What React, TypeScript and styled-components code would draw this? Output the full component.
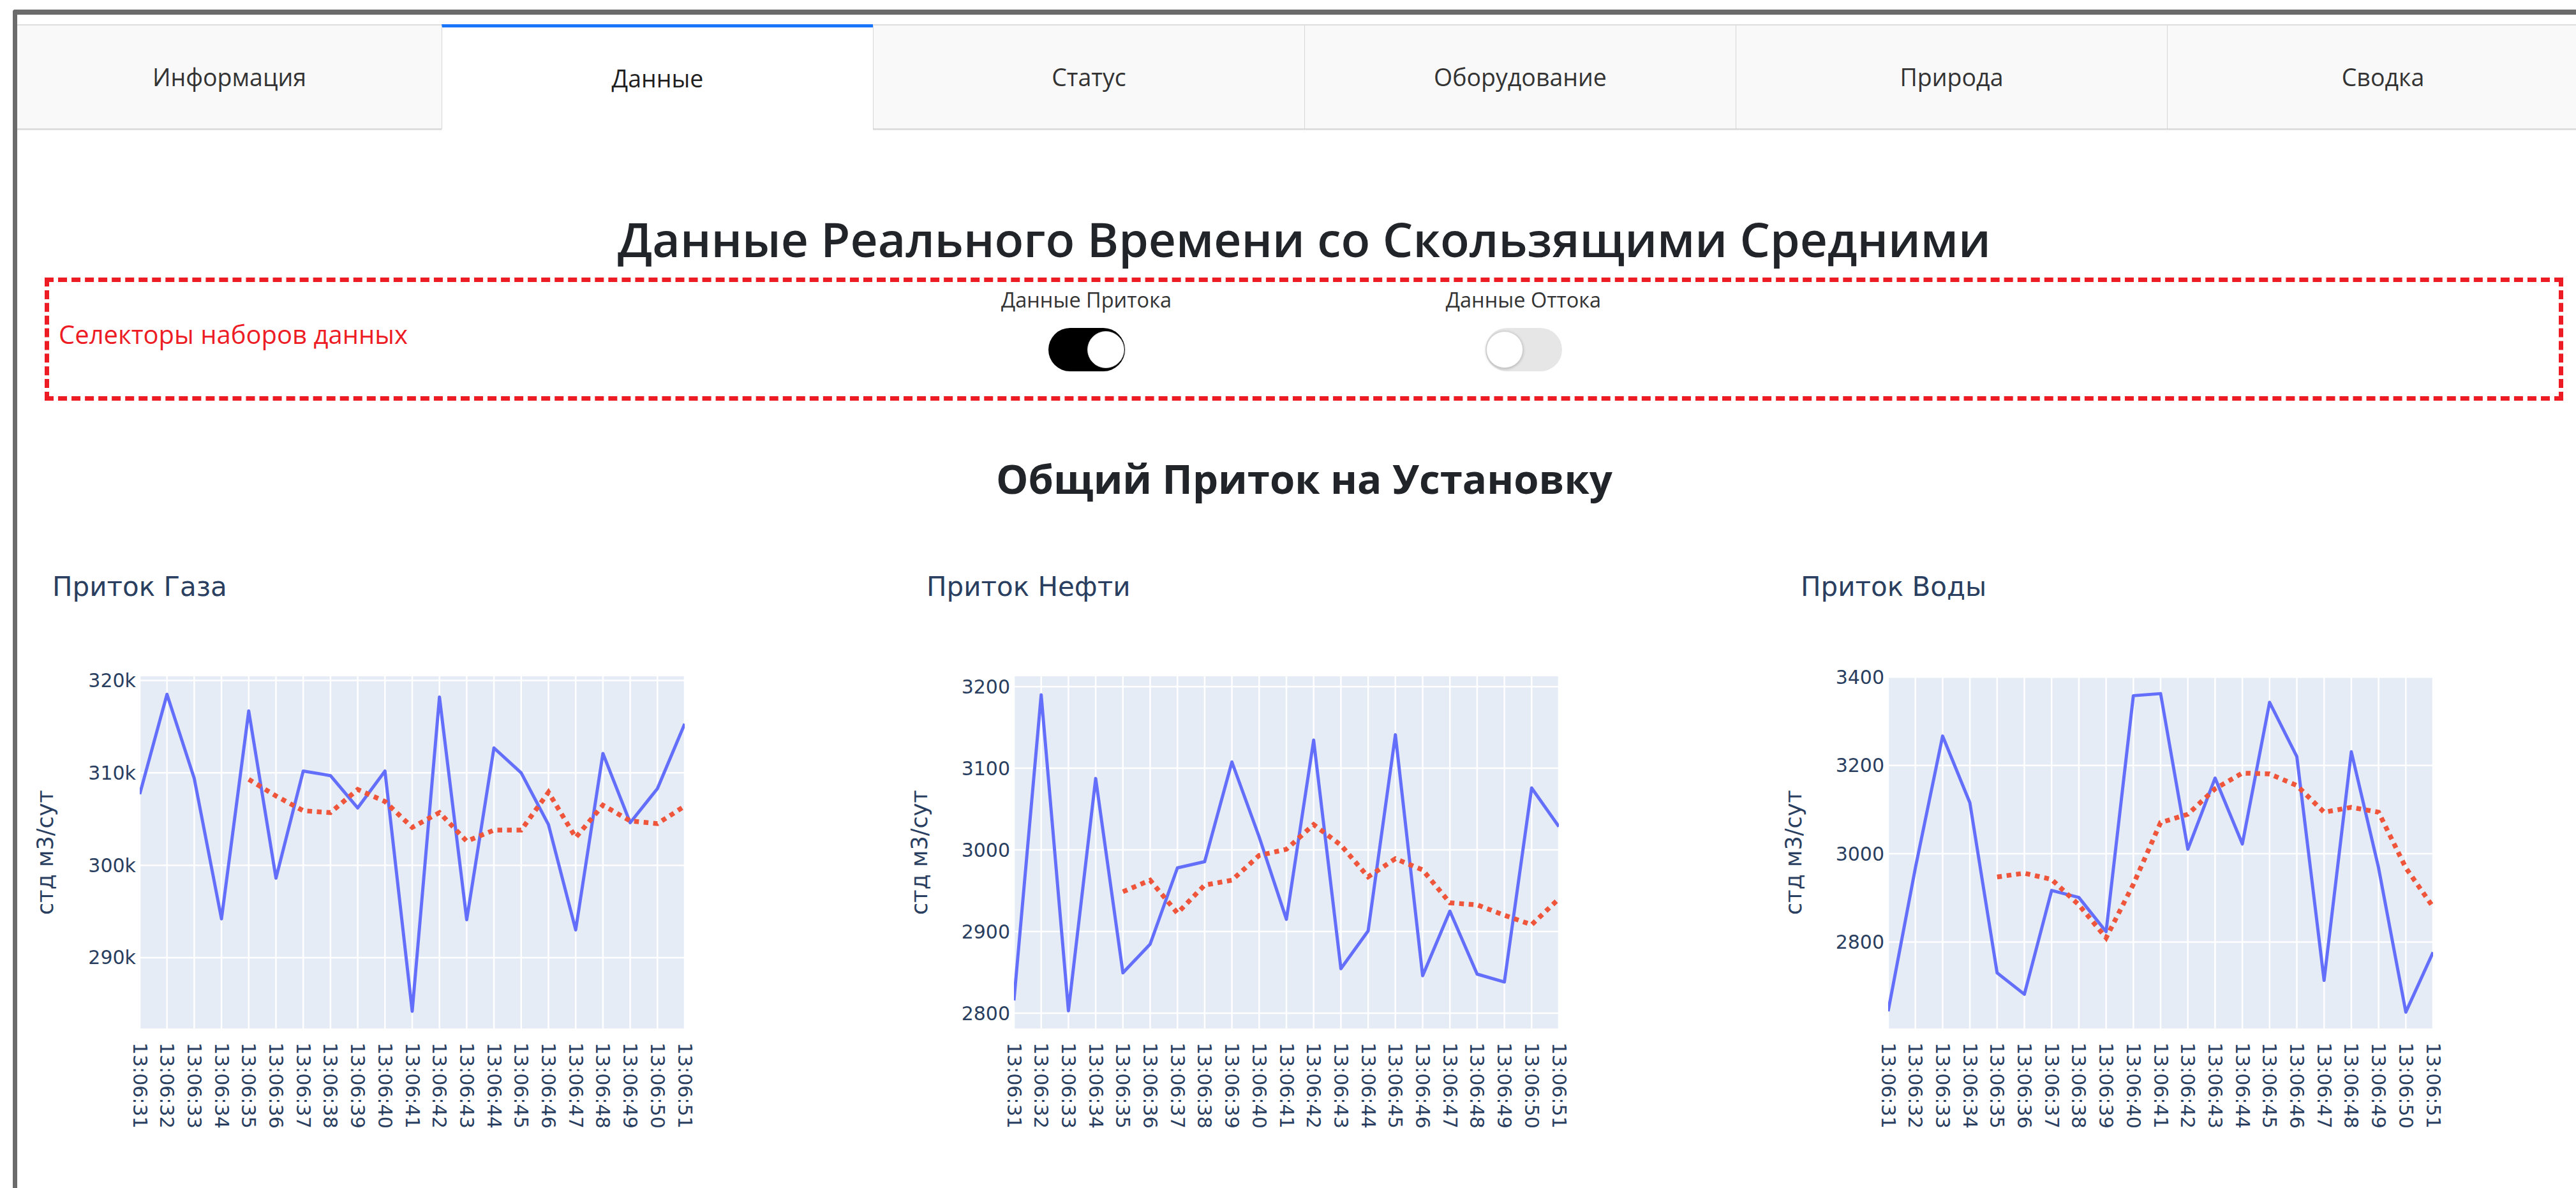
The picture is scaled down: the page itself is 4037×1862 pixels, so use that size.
import React from 'react';
import styled, { createGlobalStyle } from 'styled-components';

const GlobalStyle = createGlobalStyle`
  html, body {
    margin: 0;
    padding: 0;
    background: #ffffff;
  }
  body {
    width: 4037px;
    height: 1862px;
    overflow: hidden;
    font-family: "Open Sans", "Noto Sans", sans-serif;
  }
`;

const Screen = styled.div`
  width: 4037px;
  height: 1862px;
  padding-top: 15px;
  box-sizing: border-box;
  overflow: hidden;
`;

// grey window outline, only top and left are in view
const Frame = styled.div`
  margin-left: 20px;
  height: 100%;
  box-sizing: border-box;
  padding-top: 15px;
  border-top: 8px solid #6b6b6b;
  border-left: 7px solid #6b6b6b;
  border-top-left-radius: 4px;
`;

const Content = styled.div`
  width: 4034px;
`;

const TabStrip = styled.div`
  display: grid;
  grid-template-columns: 665px repeat(5, 676px);
`;

const Tab = styled.div<{ $active?: boolean }>`
  height: 166px;
  box-sizing: border-box;
  display: flex;
  align-items: center;
  justify-content: center;
  font-size: 37.5px;
  color: ${p => (p.$active ? '#1f1f1f' : '#333333')};
  background: ${p => (p.$active ? '#ffffff' : '#f9f9f9')};
  border-top: ${p => (p.$active ? '5px solid #1975fa' : '2px solid #dedede')};
  border-bottom: 3px solid ${p => (p.$active ? '#ffffff' : '#dedede')};
  border-left: 1px solid #d6d6d6;

  &:first-child {
    border-left: none;
  }
`;

const MainTitle = styled.h1`
  margin: 120px 0 0;
  font-size: 75px;
  line-height: 100px;
  font-weight: 600;
  color: #212529;
  text-align: center;
`;

const SelectorBox = styled.div`
  margin: 11px 0 0 43px;
  width: 3947px;
  height: 193px;
  box-sizing: border-box;
  padding: 8px 0 0 15px;
  border: 7px dashed #ed1c24;
  display: grid;
  grid-template-columns: 1268px 685px 685px;
`;

const SelectorNote = styled.div`
  align-self: center;
  margin-bottom: 24px;
  font-size: 40px;
  line-height: 56px;
  color: #ed1c24;
`;

const SwitchItem = styled.div`
  display: flex;
  flex-direction: column;
  align-items: center;
`;

const SwitchLabel = styled.div`
  font-size: 32.5px;
  line-height: 40px;
  color: #333333;
`;

const SwitchTrack = styled.div<{ $on?: boolean }>`
  margin-top: 24px;
  width: 120px;
  height: 68px;
  box-sizing: border-box;
  padding: 0 1px;
  border-radius: 34px;
  background: ${p => (p.$on ? '#000000' : '#e6e6e6')};
  display: flex;
  align-items: center;
  justify-content: ${p => (p.$on ? 'flex-end' : 'flex-start')};
`;

const SwitchKnob = styled.div`
  width: 58px;
  height: 58px;
  box-sizing: border-box;
  border-radius: 50%;
  background: #ffffff;
  border: 1px solid #d4d4d4;
  box-shadow: 0 1px 4px rgba(0, 0, 0, 0.25);
`;

const SectionTitle = styled.h3`
  margin: 82px 0 0;
  font-size: 63.5px;
  line-height: 80px;
  font-weight: 700;
  color: #212529;
  text-align: center;
`;

const ChartRow = styled.div`
  margin: 50px 0 0 -8px;
  display: grid;
  grid-template-columns: repeat(3, 1370px);
`;

const ChartSvg = styled.svg`
  display: block;
  font-family: "DejaVu Sans", Verdana, sans-serif;
`;

interface chartProps {
  title: string,
  min: number,
  max: number,
  ticks: number[],
  format: (v: number) => string,
  raw: number[],
  avg: (number | null)[]
}

// plot geometry inside one chart cell
const W = 1370;
const H = 1022;
const PL = 200;
const PR = 1054;
const PT = 220;
const PB = 772;

const times = Array.from({ length: 21 }, (_, i) => '13:06:' + (31 + i));

const LineChart = (props: chartProps) => {
  const { title, min, max, ticks, format, raw, avg } = props;
  const step = (PR - PL) / (raw.length - 1);
  const x = (i: number) => PL + i * step;
  const y = (v: number) => PT + ((max - v) / (max - min)) * (PB - PT);
  const clipId = 'clip-' + title.replace(/\s/g, '');

  const rawPts = raw.map((v, i) => `${x(i)},${y(v)}`).join(' ');
  const avgPts = avg
    .map((v, i) => (v === null ? null : `${x(i)},${y(v)}`))
    .filter(Boolean)
    .join(' ');

  return (
    <ChartSvg width={W} height={H} viewBox={`0 0 ${W} ${H}`}>
      <defs>
        <clipPath id={clipId}>
          <rect x={PL} y={PT} width={PR - PL} height={PB - PT} />
        </clipPath>
      </defs>

      <text x={63} y={94} fontSize={42} fill="#2a3f5f">{title}</text>

      <rect x={PL} y={PT} width={PR - PL} height={PB - PT} fill="#e5ecf6" />
      {times.map((t, i) => (
        <line key={t} x1={x(i)} x2={x(i)} y1={PT} y2={PB} stroke="#ffffff" strokeWidth={2.5} />
      ))}
      {ticks.map(v => (
        <line key={v} x1={PL} x2={PR} y1={y(v)} y2={y(v)} stroke="#ffffff" strokeWidth={2.5} />
      ))}

      <g clipPath={`url(#${clipId})`}>
        <polyline points={rawPts} fill="none" stroke="#636efa" strokeWidth={5} strokeLinejoin="round" />
        <polyline points={avgPts} fill="none" stroke="#ef553b" strokeWidth={7.5} strokeDasharray="7.5 7.5" />
      </g>

      {ticks.map(v => (
        <text key={v} x={PL - 6} y={y(v)} dy="0.35em" textAnchor="end" fontSize={30} fill="#2a3f5f">
          {format(v)}
        </text>
      ))}

      {times.map((t, i) => (
        <text
          key={t}
          transform={`translate(${x(i)}, ${PB + 22}) rotate(90)`}
          dy="0.35em"
          fontSize={30}
          fill="#2a3f5f"
        >
          {t}
        </text>
      ))}

      <text
        transform={`translate(52, ${(PT + PB) / 2}) rotate(-90)`}
        dy="0.35em"
        textAnchor="middle"
        fontSize={35}
        fill="#2a3f5f"
      >
        стд м3/сут
      </text>
    </ChartSvg>
  );
};

const gas = {
  raw: [307.7, 318.5, 309.4, 294.2, 316.7, 298.6, 310.2, 309.7, 306.2, 310.2, 284.2,
    318.2, 294.1, 312.7, 310.0, 304.4, 293.0, 312.1, 304.6, 308.3, 315.3].map(v => v * 1000),
  avg: [null, null, null, null, 309.3, 307.5, 305.9, 305.7, 308.2, 306.9, 304.1,
    305.7, 302.6, 303.8, 303.8, 307.9, 303.0, 306.5, 304.8, 304.5, 306.4].map(v => (v === null ? null : v * 1000))
};

const oil = {
  raw: [2815.6, 3190, 2803, 3087.5, 2849.4, 2884.7, 2978, 2985.6, 3107.7, 3015.9, 2915,
    3134.4, 2854.5, 2900.9, 3141, 2845.9, 2925, 2847.9, 2838.3, 3075.9, 3028.5],
  avg: [null, null, null, null, 2948.8, 2962.9, 2922.6, 2956.9, 2962.9, 2993.2, 3000.8,
    3031, 3005.8, 2967, 2989.2, 2975.5, 2935.2, 2932.7, 2920, 2908.4, 2940.2]
};

const water = {
  raw: [2643, 2968, 3266.6, 3115.4, 2730, 2681.5, 2916.7, 2900.8, 2823.3, 3358, 3362.7,
    3010, 3171.4, 3022, 3343, 3220, 2713, 3231, 2968, 2641, 2776.7],
  avg: [null, null, null, null, 2947.4, 2955.8, 2941.8, 2884, 2809.4, 2930.6, 3070.6,
    3089.3, 3147.1, 3182.6, 3180.7, 3154.6, 3094, 3105.1, 3094, 2968, 2879.3]
};

const tabs = ['Информация', 'Данные', 'Статус', 'Оборудование', 'Природа', 'Сводка'];

class App extends React.Component {

  state = {
    activeTab: 'Данные',
    inflow: true,
    outflow: false
  };

  render() {
    const { activeTab, inflow, outflow } = this.state;
    return (
      <Screen>
        <GlobalStyle />
        <Frame>
          <Content>
            <TabStrip>
              {tabs.map(t => (
                <Tab key={t} $active={t === activeTab} onClick={() => this.setState({ activeTab: t })}>
                  {t}
                </Tab>
              ))}
            </TabStrip>

            <MainTitle>Данные Реального Времени со Скользящими Средними</MainTitle>

            <SelectorBox>
              <SelectorNote>Селекторы наборов данных</SelectorNote>
              <SwitchItem>
                <SwitchLabel>Данные Притока</SwitchLabel>
                <SwitchTrack $on={inflow} onClick={() => this.setState({ inflow: !inflow })}>
                  <SwitchKnob />
                </SwitchTrack>
              </SwitchItem>
              <SwitchItem>
                <SwitchLabel>Данные Оттока</SwitchLabel>
                <SwitchTrack $on={outflow} onClick={() => this.setState({ outflow: !outflow })}>
                  <SwitchKnob />
                </SwitchTrack>
              </SwitchItem>
            </SelectorBox>

            <SectionTitle>Общий Приток на Установку</SectionTitle>

            <ChartRow>
              <LineChart
                title="Приток Газа"
                min={282330}
                max={320450}
                ticks={[290000, 300000, 310000, 320000]}
                format={v => v / 1000 + 'k'}
                raw={gas.raw}
                avg={gas.avg}
              />
              <LineChart
                title="Приток Нефти"
                min={2781.3}
                max={3212.6}
                ticks={[2800, 2900, 3000, 3100, 3200]}
                format={v => String(v)}
                raw={oil.raw}
                avg={oil.avg}
              />
              <LineChart
                title="Приток Воды"
                min={2604}
                max={3401.9}
                ticks={[2800, 3000, 3200, 3400]}
                format={v => String(v)}
                raw={water.raw}
                avg={water.avg}
              />
            </ChartRow>
          </Content>
        </Frame>
      </Screen>
    );
  }
}

export default App;
